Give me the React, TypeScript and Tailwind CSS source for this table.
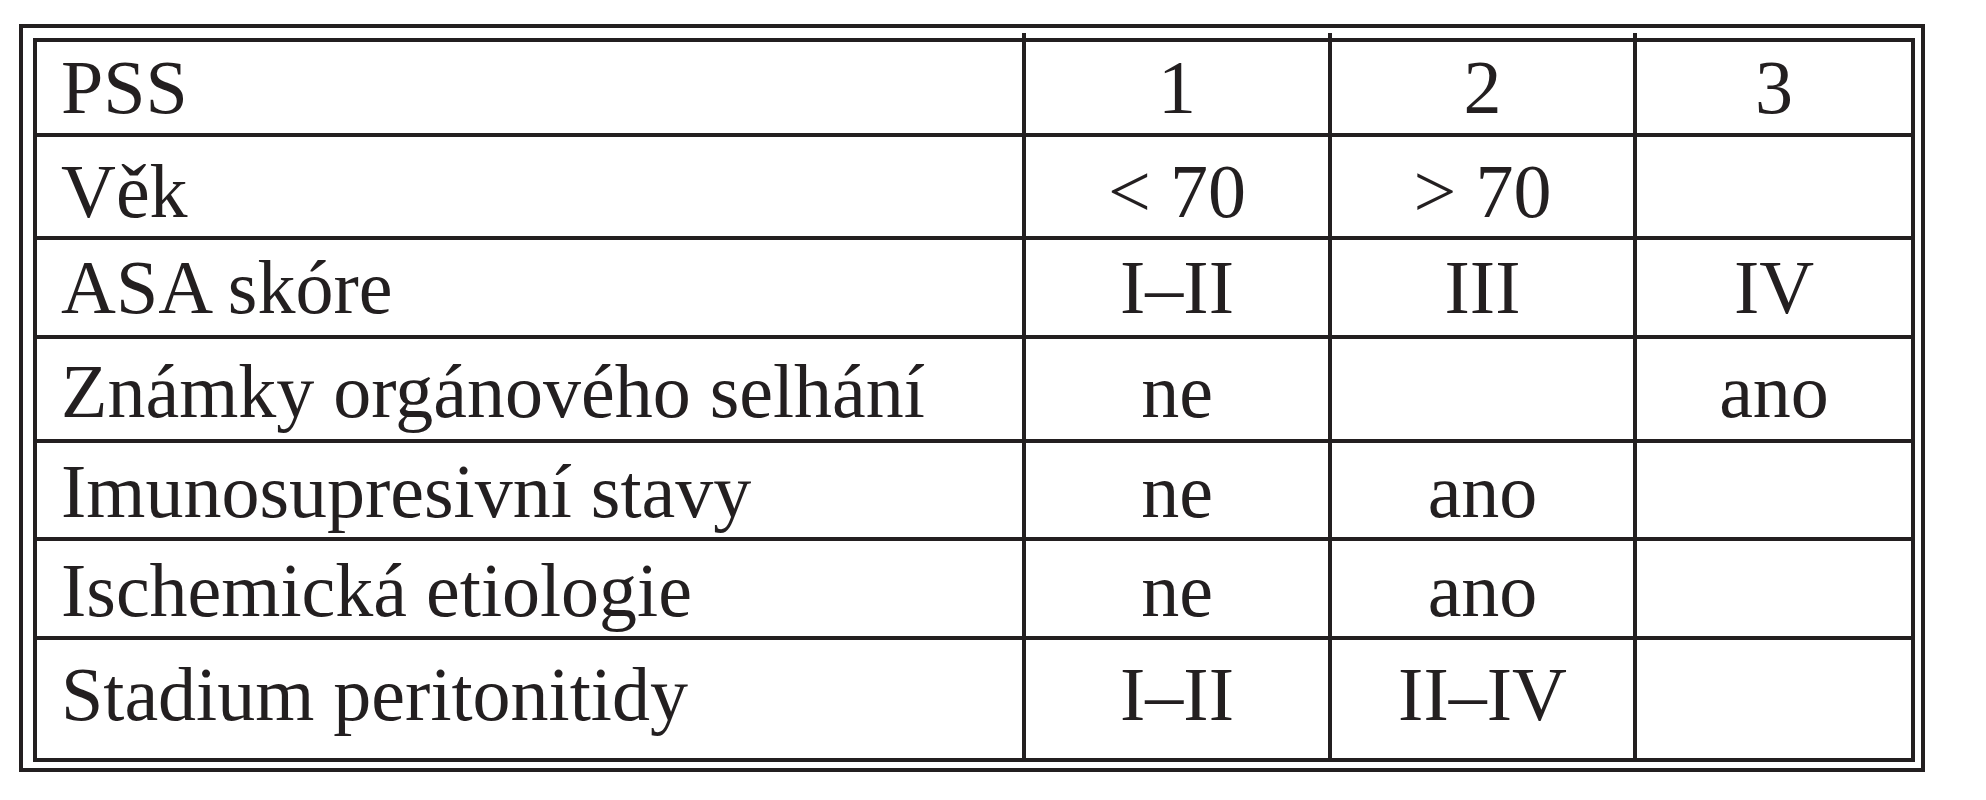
import React from "react";

type Row = {
  cells: [string, string, string, string];
  h: string;
  pt: string;
};

const rows: Row[] = [
  { cells: ["PSS", "1", "2", "3"], h: "h-[95px]", pt: "pt-[7px]" },
  { cells: ["Věk", "< 70", "> 70", ""], h: "h-[103px]", pt: "pt-[16px]" },
  { cells: ["ASA skóre", "I–II", "III", "IV"], h: "h-[99px]", pt: "pt-[9px]" },
  { cells: ["Známky orgánového selhání", "ne", "", "ano"], h: "h-[104px]", pt: "pt-[14px]" },
  { cells: ["Imunosupresivní stavy", "ne", "ano", ""], h: "h-[98px]", pt: "pt-[10px]" },
  { cells: ["Ischemická etiologie", "ne", "ano", ""], h: "h-[99px]", pt: "pt-[11px]" },
  { cells: ["Stadium peritonitidy", "I–II", "II–IV", ""], h: "h-[118px]", pt: "pt-[16px]" },
];

function Tick() {
  return <span className="absolute right-[-4px] top-[-9px] w-[4px] h-[9px] bg-[#231f20]" />;
}

export default function App() {
  return (
    <div className="w-full h-[800px] bg-white pt-[24px] pl-[19px] font-['Liberation_Serif',serif] text-[#231f20]">
      <div className="w-[1906px] h-[748px] border-4 border-[#231f20] pt-[10px] pl-[10px]">
        <div className="w-[1882px] h-[724px] border-4 border-[#231f20] flex flex-col">
          {rows.map((r, i) => {
            const last = i === rows.length - 1;
            const header = i === 0;
            return (
              <div
                key={i}
                className={`flex ${r.h} ${last ? "" : "border-b-4 border-[#231f20]"}`}
              >
                <div className={`relative w-[989px] border-r-4 border-[#231f20] pl-[24px] ${r.pt} text-[76px] leading-none`}>
                  {r.cells[0]}
                  {header && <Tick />}
                </div>
                <div className={`relative w-[306px] border-r-4 border-[#231f20] text-center ${r.pt} text-[76px] leading-none`}>
                  {r.cells[1]}
                  {header && <Tick />}
                </div>
                <div className={`relative w-[305px] border-r-4 border-[#231f20] text-center ${r.pt} text-[76px] leading-none`}>
                  {r.cells[2]}
                  {header && <Tick />}
                </div>
                <div className={`flex-1 text-center ${r.pt} text-[76px] leading-none`}>
                  {r.cells[3]}
                </div>
              </div>
            );
          })}
        </div>
      </div>
    </div>
  );
}
